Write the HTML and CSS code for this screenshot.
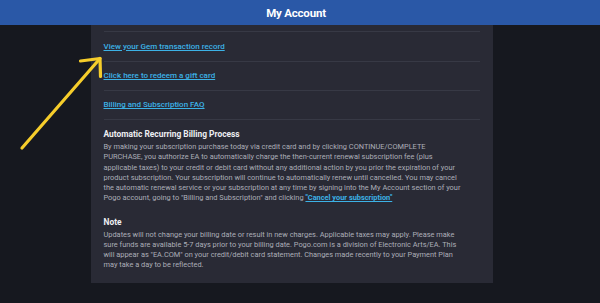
FILE: index.html
```html
<!DOCTYPE html>
<html lang="en">
<head>
  <meta charset="UTF-8">
  <meta name="viewport" content="width=device-width, initial-scale=1.0">
  <title>My Account</title>
  <link rel="stylesheet" href="styles.css">
</head>
<body>
  <header class="topbar">
    <h1>My Account</h1>
  </header>
  <main class="page">
    <section class="account-panel">
      <ul class="link-list">
        <li><a href="#">View your Gem transaction record</a></li>
        <li><a href="#">Click here to redeem a gift card</a></li>
        <li><a href="#">Billing and Subscription FAQ</a></li>
      </ul>
      <div class="info-block">
        <h2>Automatic Recurring Billing Process</h2>
        <p>By making your subscription purchase today via credit card and by clicking CONTINUE/COMPLETE<br>
        PURCHASE, you authorize EA to automatically charge the then-current renewal subscription fee (plus<br>
        applicable taxes) to your credit or debit card without any additional action by you prior the expiration of your<br>
        product subscription. Your subscription will continue to automatically renew until cancelled. You may cancel<br>
        the automatic renewal service or your subscription at any time by signing into the My Account section of your<br>
        Pogo account, going to "Billing and Subscription" and clicking <a href="#">"Cancel your subscription"</a></p>
      </div>
      <div class="info-block">
        <h2>Note</h2>
        <p>Updates will not change your billing date or result in new charges. Applicable taxes may apply. Please make<br>
        sure funds are available 5-7 days prior to your billing date. Pogo.com is a division of Electronic Arts/EA. This<br>
        will appear as "EA.COM" on your credit/debit card statement. Changes made recently to your Payment Plan<br>
        may take a day to be reflected.</p>
      </div>
    </section>
  </main>
  <!-- hand-drawn annotation arrow on top of the page -->
  <svg class="arrow" width="120" height="160" viewBox="0 0 120 160">
    <g fill="none" stroke="#f6cd2b" stroke-width="3.2" stroke-linecap="round" stroke-linejoin="round">
      <path d="M22 148 L100 58.5"/>
      <path d="M80.5 61 L100 58.5 L100.5 76.5"/>
    </g>
  </svg>
</body>
</html>
```
FILE: styles.css
```css
body{
  margin: 0;
  height: 303px;
  background: #16181f;
  font-family: Roboto, "Liberation Sans", sans-serif;
  position: relative;
  overflow: hidden;
}
.topbar{
  height: 25px;
  background: #2a58a7;
  display: flex;
  align-items: center;
  justify-content: center;
  padding-right: 8px;
}
.topbar h1{
  margin: 0;
  color: #ffffff;
  font-size: 11.5px;
  font-weight: 700;
  letter-spacing: -0.2px;
}
.page{
  width: 583px;
}
.account-panel{
  width: 402px;
  margin: 0 auto;
  box-sizing: border-box;
  background: #292a35;
  padding: 6px 13px 12.4px;
}
.link-list{
  list-style: none;
  margin: 0;
  padding: 0;
}
.link-list li{
  height: 29.5px;
  box-sizing: border-box;
  border-top: 1px solid #373945;
  display: flex;
  align-items: center;
}
.link-list li:last-child{
  border-bottom: 1px solid #373945;
}
a{
  color: #3cb2e6;
  font-weight: 500;
}
.link-list a{
  font-size: 8px;
}
.info-block{
  padding-top: 8.8px;
}
.info-block + .info-block{
  padding-top: 12.3px;
}
.info-block h2{
  margin: 0 0 1.9px;
  font-size: 8.4px;
  line-height: 12px;
  font-weight: 700;
  color: #eeeef2;
}
.info-block p{
  margin: 0;
  font-size: 7.4px;
  line-height: 10.2px;
  color: #acaeb8;
  white-space: nowrap;
}
.info-block p a{
  font-weight: 700;
}
.arrow{
  position: absolute;
  left: 0;
  top: 0;
}
```
